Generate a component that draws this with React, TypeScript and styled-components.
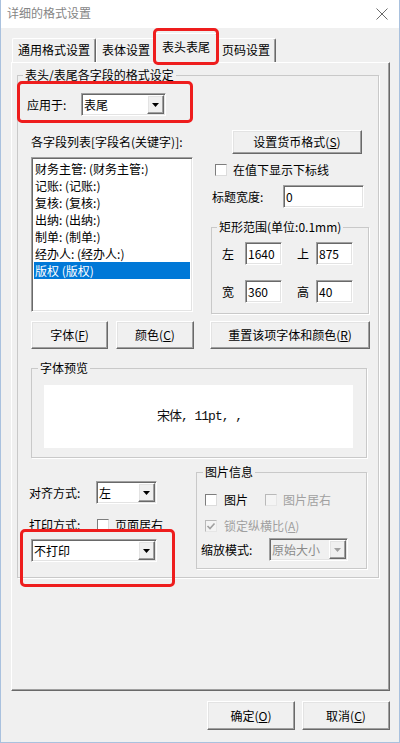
import React from "react";
import styled, { createGlobalStyle, css } from "styled-components";

const FONT = `"Noto Sans CJK SC", "Noto Sans", sans-serif`;

const GlobalStyle = createGlobalStyle`
  html, body { margin: 0; padding: 0; background: #f0f0f0; }
  * { box-sizing: border-box; }
`;

const sunken = css`
  background: #fff;
  border: 1px solid;
  border-color: #a0a0a0 #ffffff #ffffff #a0a0a0;
  box-shadow: inset 1px 1px #696969, inset -1px -1px #e3e3e3;
`;

const raised = css`
  background: #f0f0f0;
  border: 1px solid;
  border-color: #ffffff #696969 #696969 #ffffff;
  box-shadow: inset -1px -1px #a0a0a0, inset 1px 1px #e3e3e3;
`;

const Window = styled.div`
  width: 400px;
  height: 743px;
  display: flex;
  flex-direction: column;
  background: #f0f0f0;
  border: 1px solid #a9c1de;
  border-top: none;
  font-family: ${FONT};
  font-size: 12px;
  line-height: 16px;
  color: #000;
  overflow: hidden;
`;

const TitleBar = styled.div`
  height: 28px;
  flex: none;
  background: #fff;
  display: flex;
  align-items: center;
  padding-left: 6px;
`;

const Title = styled.div`
  color: #858585;
  font-size: 12px;
  margin-top: -2px;
`;

const CloseBtn = styled.div`
  margin-left: auto;
  margin-right: 11px;
  width: 12px;
  height: 12px;
  display: flex;
`;

const Body = styled.div`
  flex: 1;
  display: flex;
  flex-direction: column;
  padding: 5px 9px 0 10px;
`;

const TabRow = styled.div`
  height: 29px;
  display: flex;
  align-items: flex-end;
  padding-left: 1px;
  position: relative;
  z-index: 2;
`;

const Tab = styled.div<{ $active?: boolean }>`
  position: relative;
  height: ${(p) => (p.$active ? 30 : 24)}px;
  margin-bottom: ${(p) => (p.$active ? -1 : 0)}px;
  margin-left: ${(p) => (p.$active ? -2 : 0)}px;
  margin-right: ${(p) => (p.$active ? -2 : 0)}px;
  padding: 0 ${(p) => (p.$active ? 7 : 5)}px ${(p) => (p.$active ? 4 : 1)}px;
  display: flex;
  align-items: center;
  background: #f0f0f0;
  border-top: 1px solid #fff;
  border-left: 1px solid #fff;
  border-right: 1px solid #696969;
  box-shadow: inset -1px 0 #a0a0a0;
  border-radius: 2px 2px 0 0;
  white-space: nowrap;
  z-index: ${(p) => (p.$active ? 2 : 1)};
`;

const Highlight = styled.div<{ $l: number; $t: number; $w: number; $h: number }>`
  position: absolute;
  left: ${(p) => p.$l}px;
  top: ${(p) => p.$t}px;
  width: ${(p) => p.$w}px;
  height: ${(p) => p.$h}px;
  border: 3px solid #ee1d1d;
  border-radius: 5px;
  pointer-events: none;
  z-index: 5;
`;

const Panel = styled.div`
  height: 629px;
  flex: none;
  border-top: 1px solid #fff;
  border-left: 1px solid #fff;
  border-right: 1px solid #696969;
  border-bottom: 1px solid #696969;
  box-shadow: inset -1px -1px #a0a0a0;
`;

const GroupBox = styled.fieldset`
  margin: 0;
  padding: 0;
  min-width: 0;
  border: 1px solid #c9c9c9;
  box-shadow: 1px 1px #fff;
  flex: none;
`;

const Legend = styled.legend<{ $ml: number }>`
  padding: 0 2px;
  margin-left: ${(p) => p.$ml}px;
  font-size: 12px;
  line-height: 16px;
`;

const MainGroup = styled(GroupBox)`
  margin: 4px 0 0 5px;
  width: 362px;
  height: 511px;
`;

const Row = styled.div`
  display: flex;
  align-items: center;
  position: relative;
`;

const ApplyRow = styled(Row)`
  margin-top: 10px;
  height: 23px;
  padding-left: 9px;
`;

const Label = styled.div<{ $w?: number; $gray?: boolean }>`
  width: ${(p) => (p.$w ? `${p.$w}px` : "auto")};
  flex: none;
  white-space: nowrap;
  color: ${(p) => (p.$gray ? "#a0a0a0" : "#000")};
`;

const ComboBox = styled.div<{ $w: number; $disabled?: boolean }>`
  ${sunken};
  background: ${(p) => (p.$disabled ? "#f0f0f0" : "#fff")};
  width: ${(p) => p.$w}px;
  height: 23px;
  padding: 1px;
  display: flex;
  flex: none;
`;

const ComboText = styled.div<{ $disabled?: boolean }>`
  flex: 1;
  padding-left: 1px;
  display: flex;
  align-items: center;
  white-space: nowrap;
  color: ${(p) => (p.$disabled ? "#8a8a8a" : "#000")};
`;

const DropBtn = styled.div`
  ${raised};
  width: 17px;
  height: 100%;
  display: flex;
  align-items: center;
  justify-content: center;
`;

const MiddleRow = styled.div`
  display: flex;
  margin-top: 14px;
`;

const LeftCol = styled.div`
  margin-left: 13px;
  width: 162px;
  display: flex;
  flex-direction: column;
`;

const ListLabel = styled.div`
  margin-top: 4px;
  height: 16px;
  white-space: nowrap;
`;

const ListBox = styled.div`
  ${sunken};
  margin-top: 7px;
  height: 155px;
  padding: 2px 2px;
`;

const ListItem = styled.div<{ $selected?: boolean }>`
  height: 17px;
  line-height: 17px;
  padding-left: 1px;
  white-space: nowrap;
  background: ${(p) => (p.$selected ? "#0078d7" : "transparent")};
  color: ${(p) => (p.$selected ? "#fff" : "#000")};
`;

const RightCol = styled.div`
  margin-left: 17px;
  width: 160px;
  display: flex;
  flex-direction: column;
`;

const Button = styled.div<{ $w: number; $h?: number; $ml?: number }>`
  ${raised};
  width: ${(p) => p.$w}px;
  height: ${(p) => p.$h ?? 28}px;
  margin-left: ${(p) => p.$ml ?? 0}px;
  flex: none;
  display: flex;
  align-items: center;
  justify-content: center;
  white-space: nowrap;
`;

const CheckRow = styled(Row)<{ $mt: number; $pl: number }>`
  margin-top: ${(p) => p.$mt}px;
  padding-left: ${(p) => p.$pl}px;
  height: 16px;
`;

const Box = styled.span<{ $disabled?: boolean; $ml?: number }>`
  width: 12px;
  height: 12px;
  flex: none;
  margin-left: ${(p) => p.$ml ?? 0}px;
  display: flex;
  align-items: center;
  justify-content: center;
  background: ${(p) => (p.$disabled ? "#f4f4f4" : "#fff")};
  border: 1px solid;
  border-color: ${(p) =>
    p.$disabled ? "#b9b9b9 #e6e6e6 #e6e6e6 #b9b9b9" : "#7d7d7d #dcdcdc #dcdcdc #7d7d7d"};
`;

const CheckText = styled.span<{ $gray?: boolean; $ml: number }>`
  margin-left: ${(p) => p.$ml}px;
  white-space: nowrap;
  color: ${(p) => (p.$gray ? "#a0a0a0" : "#000")};
`;

const WidthRow = styled(Row)`
  margin-top: 7px;
  height: 23px;
  padding-left: 2px;
`;

const Edit = styled.div<{ $w: number }>`
  ${sunken};
  width: ${(p) => p.$w}px;
  height: 23px;
  padding: 0 2px;
  display: flex;
  align-items: center;
  flex: none;
`;

const RectGroup = styled(GroupBox)`
  margin: 11px 0 0 1px;
  width: 158px;
  height: 95px;
`;

const RectGrid = styled.div`
  margin: 7px 0 0 10px;
  display: grid;
  grid-template-columns: 23px 52px 19px 37px;
  row-gap: 15px;
  align-items: center;
`;

const ButtonRow = styled.div`
  display: flex;
  margin-top: 7px;
  padding-left: 13px;
`;

const PreviewGroup = styled(GroupBox)`
  margin: 11px 0 0 13px;
  width: 336px;
  height: 98px;
`;

const PreviewBox = styled.div`
  margin: 9px 0 0 12px;
  width: 309px;
  height: 63px;
  background: #fff;
  display: flex;
  align-items: center;
  justify-content: center;
  font-family: "Liberation Mono", "Noto Sans CJK SC", monospace;
  font-size: 13px;
  letter-spacing: -1px;
  color: #111;
  padding-left: 2px;
`;

const BottomRow = styled.div`
  display: flex;
  align-items: flex-start;
  margin-top: 6px;
`;

const BottomLeft = styled.div`
  margin-left: 11px;
  width: 167px;
  display: flex;
  flex-direction: column;
`;

const AlignRow = styled(Row)`
  margin-top: 17px;
  height: 23px;
`;

const PrintRow = styled(Row)`
  margin-top: 13px;
  height: 16px;
`;

const ComboWrap = styled.div`
  position: relative;
  margin: 6px 0 0 2px;
  width: 126px;
`;

const PicGroup = styled(GroupBox)`
  width: 171px;
  height: 105px;
`;

const ScaleRow = styled(Row)`
  margin-top: 4px;
  height: 23px;
  padding-left: 4px;
`;

const Footer = styled.div`
  display: flex;
  justify-content: flex-end;
  gap: 7px;
  margin-top: 10px;
`;

const Tri = ({ gray }: { gray?: boolean }) => (
  <svg width="7" height="4" viewBox="0 0 7 4">
    <polygon points="0,0 7,0 3.5,4" fill={gray ? "#a0a0a0" : "#000"} />
  </svg>
);

const Combo = ({ w, text, disabled }: { w: number; text: string; disabled?: boolean }) => (
  <ComboBox $w={w} $disabled={disabled}>
    <ComboText $disabled={disabled}>{text}</ComboText>
    <DropBtn>
      <Tri gray={disabled} />
    </DropBtn>
  </ComboBox>
);

const Check = ({ disabled, checked, ml }: { disabled?: boolean; checked?: boolean; ml?: number }) => (
  <Box $disabled={disabled} $ml={ml}>
    {checked && (
      <svg width="10" height="10" viewBox="0 0 10 10">
        <polyline points="1.5,5 4,7.5 8.5,2.5" fill="none" stroke="#a0a0a0" strokeWidth="1.6" />
      </svg>
    )}
  </Box>
);

const items = [
  "财务主管: (财务主管:)",
  "记账: (记账:)",
  "复核: (复核:)",
  "出纳: (出纳:)",
  "制单: (制单:)",
  "经办人: (经办人:)",
  "版权 (版权)",
];

export default function App() {
  return (
    <>
      <GlobalStyle />
      <Window>
        <TitleBar>
          <Title>详细的格式设置</Title>
          <CloseBtn>
            <svg width="12" height="12" viewBox="0 0 12 12">
              <path d="M0.5 0.5 L11.5 11.5 M11.5 0.5 L0.5 11.5" stroke="#6b6b6b" strokeWidth="1" />
            </svg>
          </CloseBtn>
        </TitleBar>
        <Body>
          <TabRow>
            <Tab>通用格式设置</Tab>
            <Tab>表体设置</Tab>
            <Tab $active>
              表头表尾
              <Highlight $l={-2} $t={-6} $w={66} $h={37} />
            </Tab>
            <Tab>页码设置</Tab>
          </TabRow>
          <Panel>
            <MainGroup>
              <Legend $ml={5}>表头/表尾各字段的格式设定</Legend>
              <ApplyRow>
                <Label $w={54}>应用于:</Label>
                <Combo w={85} text="表尾" />
                <Highlight $l={-1} $t={-12} $w={176} $h={42} />
              </ApplyRow>
              <MiddleRow>
                <LeftCol>
                  <ListLabel>各字段列表[字段名(关键字)]:</ListLabel>
                  <ListBox>
                    {items.map((t, i) => (
                      <ListItem key={t} $selected={i === items.length - 1}>
                        {t}
                      </ListItem>
                    ))}
                  </ListBox>
                </LeftCol>
                <RightCol>
                  <Button $w={130} $h={24} $ml={22}>
                    设置货币格式(<u>S</u>)
                  </Button>
                  <CheckRow $mt={8} $pl={5}>
                    <Check />
                    <CheckText $ml={6}>在值下显示下标线</CheckText>
                  </CheckRow>
                  <WidthRow>
                    <Label $w={71}>标题宽度:</Label>
                    <Edit $w={81}>0</Edit>
                  </WidthRow>
                  <RectGroup>
                    <Legend $ml={5}>矩形范围(单位:0.1mm)</Legend>
                    <RectGrid>
                      <Label>左</Label>
                      <Edit $w={37}>1640</Edit>
                      <Label>上</Label>
                      <Edit $w={37}>875</Edit>
                      <Label>宽</Label>
                      <Edit $w={37}>360</Edit>
                      <Label>高</Label>
                      <Edit $w={37}>40</Edit>
                    </RectGrid>
                  </RectGroup>
                </RightCol>
              </MiddleRow>
              <ButtonRow>
                <Button $w={77}>
                  字体(<u>F</u>)
                </Button>
                <Button $w={78} $ml={8}>
                  颜色(<u>C</u>)
                </Button>
                <Button $w={160} $ml={16}>
                  重置该项字体和颜色(<u>R</u>)
                </Button>
              </ButtonRow>
              <PreviewGroup>
                <Legend $ml={6}>字体预览</Legend>
                <PreviewBox>宋体, 11pt, ,</PreviewBox>
              </PreviewGroup>
              <BottomRow>
                <BottomLeft>
                  <AlignRow>
                    <Label $w={67}>对齐方式:</Label>
                    <Combo w={61} text="左" />
                  </AlignRow>
                  <PrintRow>
                    <Label $w={68}>打印方式:</Label>
                    <Check />
                    <CheckText $ml={6}>页面居右</CheckText>
                  </PrintRow>
                  <ComboWrap>
                    <Combo w={126} text="不打印" />
                    <Highlight $l={-11} $t={-10} $w={155} $h={58} />
                  </ComboWrap>
                </BottomLeft>
                <PicGroup>
                  <Legend $ml={6}>图片信息</Legend>
                  <CheckRow $mt={12} $pl={8}>
                    <Check />
                    <CheckText $ml={7}>图片</CheckText>
                    <Check disabled ml={17} />
                    <CheckText $ml={6} $gray>
                      图片居右
                    </CheckText>
                  </CheckRow>
                  <CheckRow $mt={10} $pl={8}>
                    <Check disabled checked />
                    <CheckText $ml={7} $gray>
                      锁定纵横比(<u>A</u>)
                    </CheckText>
                  </CheckRow>
                  <ScaleRow>
                    <Label $w={68}>缩放模式:</Label>
                    <Combo w={79} text="原始大小" disabled />
                  </ScaleRow>
                </PicGroup>
              </BottomRow>
            </MainGroup>
          </Panel>
          <Footer>
            <Button $w={88} $h={29}>
              确定(<u>O</u>)
            </Button>
            <Button $w={88} $h={29}>
              取消(<u>C</u>)
            </Button>
          </Footer>
        </Body>
      </Window>
    </>
  );
}
